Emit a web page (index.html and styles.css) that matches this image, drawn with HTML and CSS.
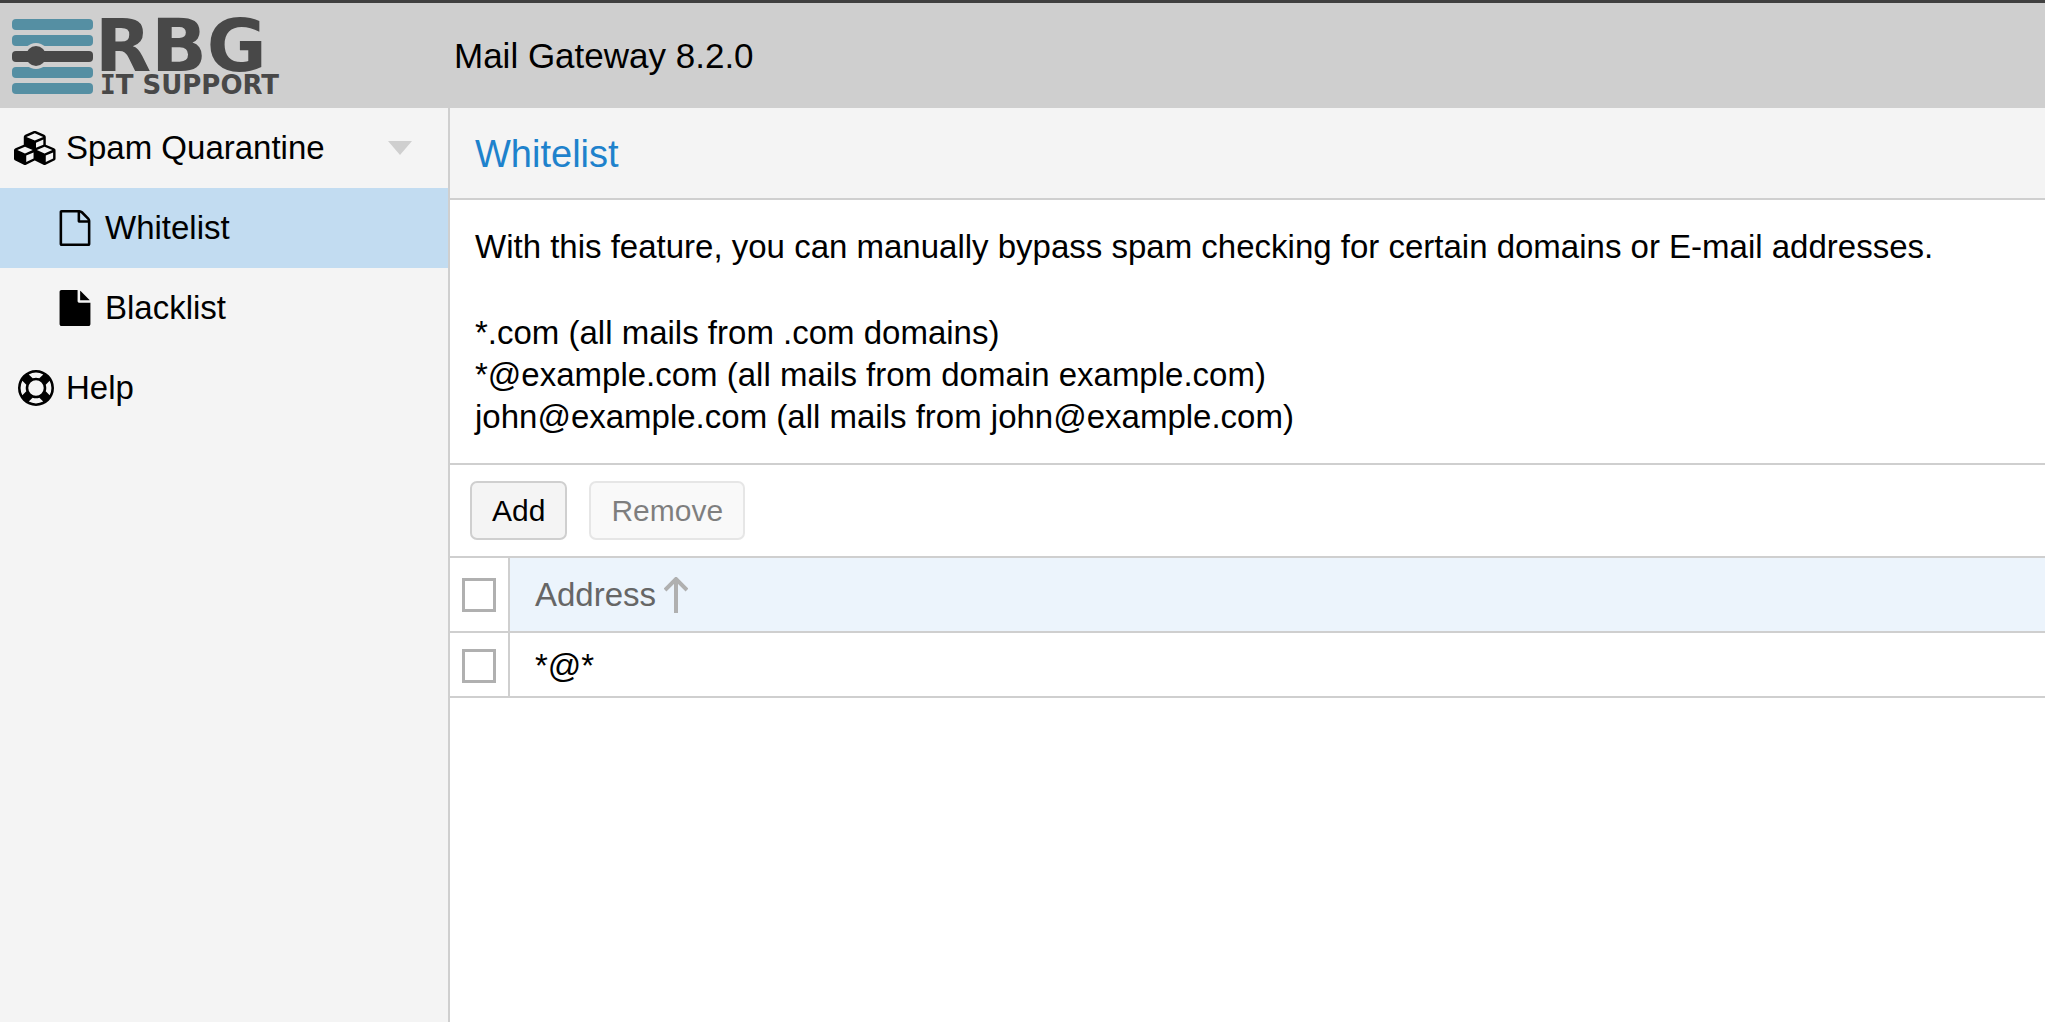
FILE: index.html
```
<!DOCTYPE html>
<html lang="en">
<head>
    <meta charset="UTF-8">
    <meta name="viewport" content="width=device-width, initial-scale=1.0">
    <title>Mail Gateway - Whitelist</title>
    <link rel="stylesheet" href="styles.css">
</head>
<body>
    <header>
        <svg class="logo" viewBox="0 -14 276 105" role="img" aria-label="RBG IT Support">
            <g fill="#558fa3">
                <rect x="0" y="2" width="81" height="11" rx="4"/>
                <rect x="0" y="18" width="81" height="11" rx="4"/>
                <rect x="0" y="50" width="81" height="11" rx="4"/>
                <rect x="0" y="66" width="81" height="11" rx="4"/>
            </g>
            <circle cx="24" cy="39" r="13" fill="#cfcfcf"/>
            <rect x="0" y="34" width="81" height="11" rx="4" fill="#484848"/>
            <circle cx="24" cy="39" r="10" fill="#484848"/>
            <text class="logo-name" x="83" y="54">RBG</text>
            <text class="logo-sub" x="88" y="77"><tspan class="logo-slab">I</tspan>T SUPPORT</text>
        </svg>
        <span class="product">Mail Gateway 8.2.0</span>
    </header>
    <div class="layout">
        <nav>
            <a href="#quarantine">
                <svg class="icon" viewBox="0 0 2304 1792"><path d="M640 1632l384-192v-314l-384 164v342zm-64-454l404-173-404-173-404 173zm1088 454l384-192v-314l-384 164v342zm-64-454l404-173-404-173-404 173zm-448-293l384-165v-266l-384 164v267zm-64-379l441-189-441-189-441 189zm1088 518v416q0 36-19 67t-52 47l-448 224q-25 14-57 14t-57-14l-448-224q-4-2-7-4-2 2-7 4l-448 224q-25 14-57 14t-57-14l-448-224q-33-16-52-47t-19-67v-416q0-38 21.500-70t56.500-48l434-186v-400q0-38 21.500-70t56.500-48l448-192q23-10 50-10t50 10l448 192q35 16 56.500 48t21.500 70v400l434 186q36 16 57 48t21 70z"/></svg>
                Spam Quarantine
                <svg class="caret" viewBox="0 0 24 14"><path d="M0 0h24L12 14z"/></svg>
            </a>
            <a href="#whitelist" class="sub active">
                <svg class="icon" viewBox="0 0 1792 1792"><path d="M1596 380q28 28 48 76t20 88v1152q0 40-28 68t-68 28h-1344q-40 0-68-28t-28-68v-1600q0-40 28-68t68-28h896q40 0 88 20t76 48zm-444-244v376h376q-10-29-22-41l-313-313q-12-12-41-22zm384 1528v-1024h-416q-40 0-68-28t-28-68v-416h-768v1536h1280z"/></svg>
                Whitelist
            </a>
            <a href="#blacklist" class="sub">
                <svg class="icon" viewBox="0 0 1792 1792"><path d="M1152 512v-472q22 14 36 28l408 408q14 14 28 36h-472zm-128 32q0 40 28 68t68 28h544v1056q0 40-28 68t-68 28h-1344q-40 0-68-28t-28-68v-1600q0-40 28-68t68-28h800v544z"/></svg>
                Blacklist
            </a>
            <a href="#help">
                <svg class="icon" viewBox="0 0 1792 1792"><path d="M896 0q182 0 348 71t286 191 191 286 71 348-71 348-191 286-286 191-348 71-348-71-286-191-191-286-71-348 71-348 191-286 286-191 348-71zm0 128q-190 0-361 90l194 194q82-28 167-28t167 28l194-194q-171-90-361-90zm-678 1129l194-194q-28-82-28-167t28-167l-194-194q-90 171-90 361t90 361zm678 407q190 0 361-90l-194-194q-82 28-167 28t-167-28l-194 194q171 90 361 90zm0-384q159 0 271.500-112.500t112.500-271.500-112.500-271.500-271.500-112.500-271.500 112.500-112.500 271.500 112.500 271.500 271.500 112.500zm484-217l194 194q90-171 90-361t-90-361l-194 194q28 82 28 167t-28 167z"/></svg>
                Help
            </a>
        </nav>
        <main>
            <h1>Whitelist</h1>
            <section class="description">
                <p>With this feature, you can manually bypass spam checking for certain domains or E-mail addresses.</p>
                <p>
                    *.com (all mails from .com domains)<br>
                    *@example.com (all mails from domain example.com)<br>
                    john@example.com (all mails from john@example.com)
                </p>
            </section>
            <div class="toolbar">
                <button type="button">Add</button>
                <button type="button" disabled>Remove</button>
            </div>
            <table>
                <thead>
                    <tr>
                        <th class="check"><input type="checkbox" aria-label="Select all"></th>
                        <th class="address">
                            <div class="heading">
                                Address
                                <svg class="sort" viewBox="0 0 24 36"><path d="M12 36V2M1 13L12 2l11 11"/></svg>
                            </div>
                        </th>
                    </tr>
                </thead>
                <tbody>
                    <tr>
                        <td class="check"><input type="checkbox" aria-label="Select *@*"></td>
                        <td>*@*</td>
                    </tr>
                </tbody>
            </table>
        </main>
    </div>
</body>
</html>
```
FILE: styles.css
```
* {
    box-sizing: border-box;
}
body {
    display: flex;
    flex-direction: column;
    min-height: 100vh;
    margin: 0;
    font-family: "Liberation Sans", Arial, sans-serif;
    font-size: 33px;
    line-height: 42px;
    color: #000;
    background-color: #fff;
}
header {
    display: flex;
    align-items: center;
    height: 108px;
    padding: 0 12px;
    border-top: 3px solid #404040;
    background-color: #cfcfcf;
}
.logo {
    width: 276px;
    height: 105px;
    margin-right: 166px;
    overflow: visible;
}
.logo text {
    font-family: "DejaVu Sans", Verdana, sans-serif;
    font-weight: bold;
    fill: #484848;
}
.logo .logo-name {
    font-size: 73px;
}
.logo .logo-sub {
    font-size: 26px;
}
.logo .logo-slab {
    font-family: "DejaVu Sans Mono", monospace;
}
.product {
    font-size: 35px;
}
.layout {
    display: flex;
    flex: 1;
}
nav {
    flex: none;
    width: 450px;
    border-right: 2px solid #cfcfcf;
    background-color: #f4f4f4;
}
nav a {
    display: flex;
    align-items: center;
    height: 80px;
    padding: 0 36px 0 14px;
    color: #000;
    text-decoration: none;
}
nav a.sub {
    padding-left: 53px;
}
nav a.active {
    background-color: #c2dcf1;
}
.icon {
    width: 44px;
    height: 36px;
    margin-right: 8px;
}
.caret {
    width: 24px;
    height: 14px;
    margin-left: auto;
    fill: #cfcfcf;
}
main {
    flex: 1;
    min-width: 0;
}
h1 {
    margin: 0;
    padding: 25px 25px 23px;
    font-size: 38px;
    font-weight: normal;
    color: #1e82cc;
    border-bottom: 2px solid #cfcfcf;
    background-color: #f4f4f4;
}
.description {
    padding: 26px 25px 25px;
    border-bottom: 2px solid #cfcfcf;
}
.description p {
    margin: 0;
}
.description p + p {
    margin-top: 44px;
}
.toolbar {
    display: flex;
    gap: 22px;
    padding: 16px 20px;
    border-bottom: 2px solid #cfcfcf;
}
button {
    height: 59px;
    padding: 0 20px;
    font-family: inherit;
    font-size: 30px;
    color: #000;
    border: 2px solid #cfcfcf;
    border-radius: 7px;
    background-color: #f4f4f4;
}
button:disabled {
    opacity: 0.5;
}
table {
    width: 100%;
    border-spacing: 0;
}
th, td {
    height: 65px;
    padding: 3px 25px 0;
    font-weight: normal;
    text-align: left;
    border-bottom: 2px solid #cfcfcf;
}
th {
    height: 75px;
    padding-top: 0;
}
.check {
    width: 60px;
    padding-left: 12px;
    padding-right: 12px;
    border-right: 2px solid #cfcfcf;
}
.check input {
    display: block;
    width: 34px;
    height: 34px;
    margin: 0;
    appearance: none;
    border: 3px solid #b0b0b0;
    background-color: #fff;
}
.address {
    color: #666;
    background-color: #ecf4fc;
}
.heading {
    display: flex;
    align-items: center;
    gap: 8px;
}
.sort {
    width: 24px;
    height: 36px;
    fill: none;
    stroke: #b0b0b0;
    stroke-width: 4;
}
```
